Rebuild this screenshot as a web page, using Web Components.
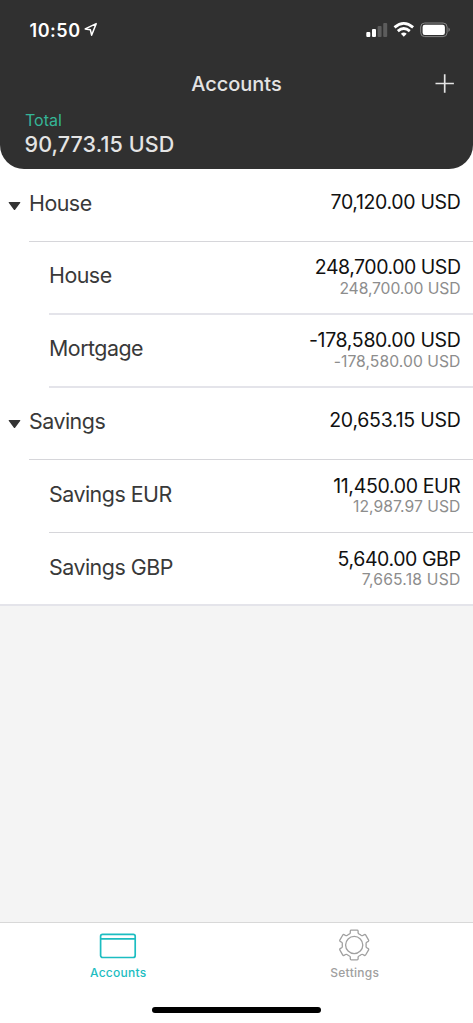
<!DOCTYPE html>
<html lang="en">
<head>
<meta charset="utf-8">
<title>Accounts</title>
<style>
html,body{margin:0;height:100%;background:#f4f4f4;font-family:Inter,"Liberation Sans",sans-serif}
</style>
</head>
<body>
<accounts-app></accounts-app>
<script>
function define(name, html, setup) {
  const t = document.createElement('template');
  t.innerHTML = html;
  customElements.define(name, class extends HTMLElement {
    constructor() { super(); this.attachShadow({mode: 'open'}).appendChild(t.content.cloneNode(true)); }
    connectedCallback() { if (setup) setup(this, this.shadowRoot); }
  });
}

define('status-bar', `<style>
:host{display:flex;justify-content:space-between;height:60px;padding:0 22px 0 29.5px;box-sizing:border-box;color:#fff}
.t{display:flex;font-size:18px;font-weight:600;line-height:22px;padding-top:20px;letter-spacing:.55px}
.t svg{margin:2px 0 0 3.5px}
.s{padding-top:20px}
svg{display:block}
</style>
<div class="t"><span>10:50</span><svg width="14" height="15" viewBox="0 0 14 15" fill="none" stroke="#fff" stroke-width="1.5" stroke-linejoin="round"><path d="M12.2 1.6 1.2 6.9 6.4 7.8 7.6 13.2Z"/></svg></div>
<svg class="s" width="86" height="20" viewBox="0 0 86 20" fill="#fff">
<rect x="1.3" y="12" width="4" height="5" rx="1"/><rect x="7" y="9" width="4" height="8" rx="1"/>
<g fill="#5c5c5c"><rect x="12.6" y="6" width="4" height="11" rx="1"/><rect x="18.2" y="3" width="4" height="14" rx="1"/></g>
<g fill="none" stroke="#fff" stroke-width="2.8"><path d="M29.5 7.4Q38.8-.6 48.1 7.4"/><path d="M32.8 11.1Q38.8 6 44.8 11.1"/></g>
<path d="M35.9 13.8Q38.8 11.4 41.7 13.8L38.8 16.8Z"/>
<rect x="55.7" y="3" width="26.4" height="13.6" rx="4" fill="none" stroke="#858585"/><rect x="57.6" y="4.8" width="22.3" height="10.2" rx="2.2"/><path d="M83.5 7.6Q86.2 9.8 83.5 12Z" fill="#858585"/>
</svg>`);

define('app-header', `<style>
:host{display:block;height:169px;background:#303030;color:#e4e4e4;border-radius:0 0 24px 24px;overflow:hidden}
.bar{display:grid;grid-template-columns:1fr auto 1fr;height:48px;align-items:center}
.title{font-size:20px;font-weight:500;line-height:24px;letter-spacing:-.05px}
.add{justify-self:end;margin-right:18px}
.label{font-size:16px;line-height:20px;margin:2px 25px 0;color:#35b597;letter-spacing:0}
.sum{font-size:21.5px;font-weight:500;line-height:26px;margin:1px 24.5px 0;letter-spacing:.1px}
.add svg{display:block}
</style>
<status-bar></status-bar>
<div class="bar"><span></span><span class="title"><slot name="title"></slot></span>
<span class="add"><svg width="20" height="20" viewBox="0 0 20 20" stroke="#e4e4e4" stroke-width="1.7"><path d="M9.7 .3v18.4M.5 9.5h18.4"/></svg></span></div>
<div class="label">Total</div><div class="sum"><slot name="total"></slot></div>`);

define('account-row', `<style>
:host{display:flex;box-sizing:border-box;height:73px;background:#fff;padding-left:49px}
:host([group]){padding-left:8px}
:host([short]){height:72px}
:host([last]){padding-left:0}
.arrow{display:none;width:21px;padding-top:33px;box-sizing:border-box}
:host([group]) .arrow{display:block}
:host([short]) .arrow{padding-top:32px}
.arrow svg{display:block}
.body{flex:1;display:flex;justify-content:space-between;border-bottom:2px solid #e4e4ea;padding-right:12.5px;box-sizing:border-box}
:host([group]) .body,:host([thin]) .body{border-bottom:1px solid #d6d6da}
:host([last]) .body{padding-left:49px}
.name{font-size:21.4px;line-height:28px;padding-top:20px;color:#393939;letter-spacing:-.5px}
.vals{text-align:right;padding-top:14px;white-space:nowrap}
:host([group]) .vals{padding-top:21px}
:host([raised]) .name{padding-top:19px}
:host([raised]) .vals{padding-top:13px}
:host([raised][group]) .vals{padding-top:20px}
.a{font-size:19.5px;line-height:24px;color:#111;letter-spacing:var(--amount-spacing,-.34px)}
.b{font-size:15.7px;line-height:20px;color:#8d8d8d;margin-top:-1px;letter-spacing:var(--converted-spacing,.05px)}
:host([raised]) .b{margin-top:0}
:host([group]) .b{display:none}
</style>
<span class="arrow"><svg width="13" height="9" viewBox="0 0 13 9"><path d="M1.3.1h10.4c.6 0 .8.5.4 1L7.1 7.7c-.3.5-.9.5-1.2 0L.9 1.1C.5.6.7.1 1.3.1Z" fill="#333"/></svg></span>
<div class="body"><div class="name"></div><div class="vals"><div class="a"></div><div class="b"></div></div></div>`,
(el, r) => {
  for (const [cls, attr] of [['name','name'],['a','amount'],['b','converted']])
    r.querySelector('.' + cls).textContent = el.getAttribute(attr) || '';
});

define('tab-item', `<style>
:host{flex:1;display:flex;flex-direction:column;align-items:center;color:#a0a0a0;font-size:12px;font-weight:500;line-height:16px}
:host([active]){color:#1cbdc1}
.i{height:42px;display:flex;align-items:center}
.l{letter-spacing:.27px}
</style><div class="i"><slot name="icon"></slot></div><div class="l"><slot></slot></div>`);

define('tab-bar', `<style>
:host{display:flex;flex-direction:column;height:101px;box-sizing:border-box;border-top:1px solid #d8d8d8;background:#fff}
nav{display:flex;height:84px}
.home{width:169px;height:6px;border-radius:3px;background:#000;margin:0 auto}
svg{display:block}
</style>
<nav>
<tab-item active><svg slot="icon" width="38" height="26" viewBox="0 0 38 26" fill="none" stroke="#1cbdc1" stroke-width="1.7" style="margin-top:4px"><rect x="1.6" y="1.3" width="34.6" height="23.2" rx="2"/><path d="M1.6 5.8h34.6"/></svg>Accounts</tab-item>
<tab-item><svg slot="icon" width="34" height="34" viewBox="-16.2 -16 34 34" fill="none" stroke="#a0a0a0" stroke-width="1.3" stroke-linejoin="round" style="margin-top:3px"><circle r="8.6"/><path class="gear"/></svg>Settings</tab-item>
</nav><div class="home"></div>`, (el, r) => {
  // Six-toothed gear outline, one tooth per 60 degrees
  const pts = [];
  for (let k = 0; k < 6; k++) {
    const a = k * Math.PI / 3, c = Math.cos(a), s = Math.sin(a);
    const p = (x, y) => (x*c - y*s).toFixed(2) + ' ' + (x*s + y*c).toFixed(2);
    pts.push((k ? 'L' : 'M') + p(-6.2, -10.2) + 'L' + p(-4.7, -11) + 'Q' + p(-3.9, -11.4) + ' ' + p(-3.9, -12.2)
      + 'L' + p(-3.9, -14) + 'Q' + p(-3.8, -14.9) + ' ' + p(-3, -14.9) + 'L' + p(3, -14.9)
      + 'Q' + p(3.8, -14.9) + ' ' + p(3.9, -14) + 'L' + p(3.9, -12.2) + 'Q' + p(3.9, -11.4) + ' ' + p(4.7, -11) + 'L' + p(6.2, -10.2));
  }
  r.querySelector('.gear').setAttribute('d', pts.join('') + 'Z');
});

define('accounts-app', `<style>
:host{display:flex;flex-direction:column;height:1023px;background:#f4f4f4}
.top{background:#fff}
main{flex:1}
</style>
<div class="top"><app-header><span slot="title">Accounts</span><span slot="total">90,773.15 USD</span></app-header></div>
<main>
<account-row group name="House" amount="70,120.00 USD"></account-row>
<account-row raised name="House" amount="248,700.00 USD" converted="248,700.00 USD" style="--amount-spacing:-.47px;--converted-spacing:-.1px"></account-row>
<account-row raised name="Mortgage" amount="-178,580.00 USD" converted="-178,580.00 USD"></account-row>
<account-row raised group short name="Savings" amount="20,653.15 USD" style="--amount-spacing:-.26px"></account-row>
<account-row thin name="Savings EUR" amount="11,450.00 EUR" converted="12,987.97 USD"></account-row>
<account-row last name="Savings GBP" amount="5,640.00 GBP" converted="7,665.18 USD" style="--amount-spacing:-.42px;--converted-spacing:.2px"></account-row>
</main>
<tab-bar></tab-bar>`);
</script>
</body>
</html>
